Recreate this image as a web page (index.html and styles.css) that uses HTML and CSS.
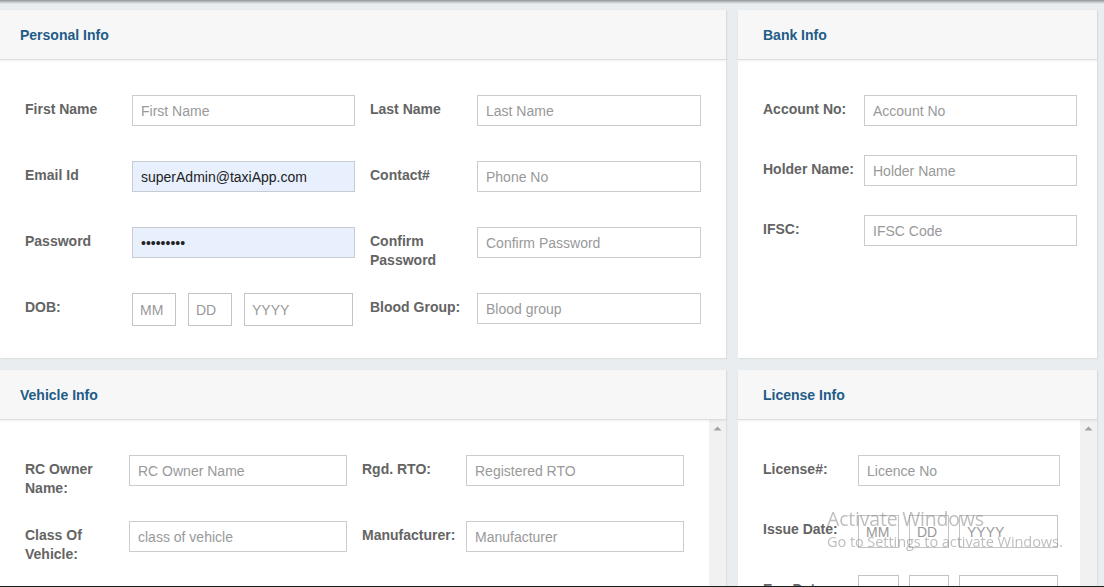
FILE: index.html
```html
<!DOCTYPE html>
<html lang="en">
<head>
<meta charset="utf-8">
<title>Driver Profile</title>
<link rel="stylesheet" href="styles.css">
</head>
<body>
<div class="topbar"></div>
<main class="layout">
  <section class="card">
    <header class="card-head"><h3>Personal Info</h3></header>
    <div class="card-body form-personal">
      <div class="field w107"><label class="lbl">First Name</label><input class="inp" placeholder="First Name"></div>
      <div class="field w107"><label class="lbl">Last Name</label><input class="inp" placeholder="Last Name"></div>
      <div class="field w107"><label class="lbl">Email Id</label><input class="inp filled" value="superAdmin@taxiApp.com"></div>
      <div class="field w107"><label class="lbl">Contact#</label><input class="inp" placeholder="Phone No"></div>
      <div class="field w107"><label class="lbl">Password</label><input class="inp filled" type="password" value="superAdmi"></div>
      <div class="field w107"><label class="lbl">Confirm Password</label><input class="inp" type="password" placeholder="Confirm Password"></div>
      <div class="field w107"><label class="lbl">DOB:</label>
        <div class="date-group dob">
          <input class="inp date mm" placeholder="MM">
          <input class="inp date dd" placeholder="DD">
          <input class="inp date yy" placeholder="YYYY">
        </div>
      </div>
      <div class="field w107"><label class="lbl">Blood Group:</label><input class="inp" placeholder="Blood group"></div>
    </div>
  </section>

  <section class="card card-side">
    <header class="card-head"><h3>Bank Info</h3></header>
    <div class="card-body form-bank">
      <div class="field w101"><label class="lbl">Account No:</label><input class="inp" placeholder="Account No"></div>
      <div class="field w101"><label class="lbl">Holder Name:</label><input class="inp" placeholder="Holder Name"></div>
      <div class="field w101"><label class="lbl">IFSC:</label><input class="inp" placeholder="IFSC Code"></div>
    </div>
  </section>

  <section class="card">
    <header class="card-head"><h3>Vehicle Info</h3></header>
    <div class="card-body scroll-body">
      <div class="scroll-content form-vehicle">
        <div class="field w104"><label class="lbl">RC Owner Name:</label><input class="inp" placeholder="RC Owner Name"></div>
        <div class="field w104"><label class="lbl">Rgd. RTO:</label><input class="inp" placeholder="Registered RTO"></div>
        <div class="field w104"><label class="lbl">Class Of Vehicle:</label><input class="inp" placeholder="class of vehicle"></div>
        <div class="field w104"><label class="lbl">Manufacturer:</label><input class="inp" placeholder="Manufacturer"></div>
      </div>
      <div class="scrolltrack"><svg class="arrow" width="9" height="5" viewBox="0 0 9 5"><path d="M0.5 4.5 L4.5 0.5 L8.5 4.5 Z" fill="#a3a3a3"/></svg></div>
    </div>
  </section>

  <section class="card card-side">
    <header class="card-head"><h3>License Info</h3></header>
    <div class="card-body scroll-body">
      <div class="scroll-content form-license">
        <div class="field w95"><label class="lbl">License#:</label><input class="inp" placeholder="Licence No"></div>
        <div class="field w95"><label class="lbl">Issue Date:</label>
          <div class="date-group lic">
            <input class="inp date mm" placeholder="MM">
            <input class="inp date dd" placeholder="DD">
            <input class="inp date yy" placeholder="YYYY">
          </div>
        </div>
        <div class="field w95"><label class="lbl">Exp Date:</label>
          <div class="date-group lic">
            <input class="inp date mm" placeholder="MM">
            <input class="inp date dd" placeholder="DD">
            <input class="inp date yy" placeholder="YYYY">
          </div>
        </div>
      </div>
      <div class="scrolltrack"><svg class="arrow" width="9" height="5" viewBox="0 0 9 5"><path d="M0.5 4.5 L4.5 0.5 L8.5 4.5 Z" fill="#a3a3a3"/></svg></div>
    </div>
  </section>
</main>

<div class="watermark">
  <div class="wm-title">Activate Windows</div>
  <div class="wm-sub">Go to Settings to activate Windows.</div>
</div>
<div class="screen-edge"></div>
</body>
</html>
```

FILE: styles.css
```css
* { box-sizing: border-box; }

html, body {
  margin: 0;
  padding: 0;
}

body {
  background: #e9edef;
  font-family: "Liberation Sans", Arial, sans-serif;
  font-size: 14px;
  color: #333;
  overflow: hidden;
  height: 587px;
}

.topbar {
  height: 4px;
  background: linear-gradient(#8f9496, #c9cdcf 60%, #e9edef);
}

.layout {
  display: grid;
  grid-template-columns: 726px 359px;
  column-gap: 12px;
  row-gap: 12px;
  padding: 6px 7px 0 0;
}

.card {
  background: #fff;
  display: flex;
  flex-direction: column;
  box-shadow: 1px 1px 1px rgba(0, 0, 0, 0.06);
}

.card-head {
  height: 50px;
  background: #f7f7f7;
  border-bottom: 1px solid #dedede;
  box-shadow: 0 1px 2px rgba(0, 0, 0, 0.06);
  display: flex;
  align-items: center;
  padding: 0 20px;
  position: relative;
  z-index: 1;
}

.card-side .card-head {
  padding: 0 25px;
}

.card-head h3 {
  margin: 0;
  font-size: 14px;
  font-weight: bold;
  color: #1f5b87;
  line-height: 16px;
}

.card-body {
  flex: 1;
}

/* Fields */
.field {
  display: flex;
  align-items: flex-start;
  height: 31px;
}

.lbl {
  flex: none;
  font-size: 14px;
  font-weight: bold;
  color: #646464;
  line-height: 19px;
  padding: 5px 4px 0 0;
}

.w107 .lbl { width: 107px; }
.w101 .lbl { width: 101px; }
.w104 .lbl { width: 104px; }
.w95 .lbl { width: 95px; }

.inp {
  flex: 1;
  min-width: 0;
  height: 31px;
  border: 1px solid #cccccc;
  border-radius: 0;
  background: #fff;
  padding: 0 8px;
  font-family: "Liberation Sans", Arial, sans-serif;
  font-size: 14px;
  color: #333;
  outline: none;
}

.inp::placeholder { color: #999; }

.inp.filled {
  background: #e8f0fe;
  border-color: #c8ccd2;
  color: #222;
}

.date-group {
  display: flex;
  flex: 1;
}

.date-group .inp {
  flex: none;
  height: 33px;
  padding: 0 7px;
  border-color: #c4c4c4;
}

.dob { gap: 12px; }
.dob .mm, .dob .dd { width: 44px; }
.dob .yy { width: 109px; }

.lic { gap: 10px; }
.lic .mm { width: 41px; }
.lic .dd { width: 40px; }
.lic .yy { width: 99px; }

/* Section forms */
.form-personal {
  display: grid;
  grid-template-columns: 330px 331px;
  grid-auto-rows: 31px;
  column-gap: 15px;
  row-gap: 35px;
  padding: 35px 25px 34px;
}

.form-bank {
  display: grid;
  grid-template-columns: 314px;
  grid-auto-rows: 31px;
  row-gap: 29px;
  padding: 35px 20px 0 25px;
  align-content: start;
}

.scroll-body {
  display: flex;
  height: 300px;
  flex: none;
}

.scroll-content {
  flex: 1;
  min-width: 0;
}

.form-vehicle {
  display: grid;
  grid-template-columns: 322px 322px;
  grid-auto-rows: 31px;
  column-gap: 15px;
  row-gap: 35px;
  padding: 35px 25px;
  align-content: start;
}

.form-license {
  display: grid;
  grid-template-columns: 297px;
  grid-auto-rows: 31px;
  row-gap: 29px;
  padding: 35px 20px 0 25px;
  align-content: start;
}

.scrolltrack {
  flex: none;
  width: 17px;
  background: #f1f1f1;
  display: flex;
  justify-content: center;
  padding-top: 6px;
}

.arrow { display: block; }

/* OS overlays */
.watermark {
  position: fixed;
  left: 827px;
  top: 505px;
  font-family: "Open Sans", "Noto Sans", sans-serif;
  color: rgba(120, 120, 120, 0.48);
  pointer-events: none;
  z-index: 10;
}

.wm-title {
  font-size: 19.5px;
  line-height: 27px;
  letter-spacing: -0.2px;
}

.wm-sub {
  font-size: 14.6px;
  line-height: 19px;
  letter-spacing: -0.1px;
}

.screen-edge {
  position: fixed;
  left: 0;
  right: 0;
  bottom: 0;
  height: 1px;
  background: #1c1c1c;
  z-index: 11;
}
```
